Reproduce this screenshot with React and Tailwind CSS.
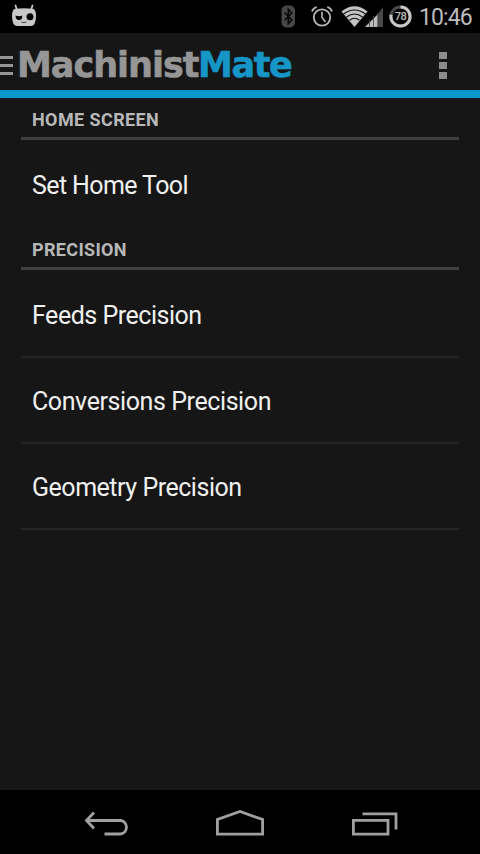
import React from "react";

function StatusBar() {
  return (
    <div className="flex h-[33px] shrink-0 items-start bg-black">
      <svg className="ml-3 mt-1 h-[23px] w-6" viewBox="0 0 24 23">
        <path d="M3.5 1.5L5 6M20.5 1.5L19 6" stroke="#c8c8c8" strokeWidth="1.8" strokeLinecap="round" />
        <path d="M3.5 4.8Q12 3.9 20.5 4.8Q24 5.2 24 12Q24 22 18.5 22H5.5Q0 22 0 12Q0 5.2 3.5 4.8Z" fill="#c8c8c8" />
        <path d="M3.5 11.5Q7 13 10.2 11.5Q10.5 16 7 16Q3.7 16 3.5 11.5Z" fill="#000" />
        <circle cx="18" cy="12.7" r="3.5" fill="#000" />
        <path d="M9.5 18Q12 19.5 14.5 18" stroke="#444" strokeWidth="1" fill="none" />
      </svg>
      <div className="flex-1" />
      <svg className="mt-[5px] h-[23px] w-[15px]" viewBox="0 0 15 23">
        <rect x="0.5" y="0.5" width="13.5" height="22" rx="5" fill="#484848" />
        <path d="M3.5 7.5L10.8 15L7.3 18.7V4.3L10.8 8L3.5 15.5" stroke="#080808" strokeWidth="1.6" fill="none" />
      </svg>
      <svg className="ml-[15px] mt-[5px] h-[23px] w-[22px]" viewBox="0 0 22 23" fill="none" stroke="#b8b8b8">
        <circle cx="11" cy="12.5" r="8.2" strokeWidth="1.8" />
        <path d="M11 6.7V12.5L14.5 17" strokeWidth="1.6" />
        <path d="M1 6.5Q2 3.2 5.7 2M21 6.5Q20 3.2 16.3 2" strokeWidth="1.8" />
      </svg>
      <svg className="ml-[8px] mt-[5px] h-[23px] w-11" viewBox="0 0 44 23">
        <path d="M0.5 6.5Q13.5-4 26.5 6.5L13.5 22Z" fill="#c4c4c4" />
        <g stroke="#101010" strokeWidth="1.2" fill="none">
          <path d="M2.5 9Q13.5 1 24.5 9" />
          <path d="M5.5 12Q13.5 6 21.5 12" />
          <path d="M8.5 15.3Q13.5 11.2 18.5 15.3" />
        </g>
        <path d="M24 22L37 9V22Z" fill="#bdbdbd" />
        <path d="M37 9L42 2V22H37Z" fill="#484848" />
        <path d="M28.5 15V22M32.5 11V22M36.7 8V22" stroke="#444" strokeWidth="0.8" />
      </svg>
      <svg className="ml-[4px] mt-[5px] h-[23px] w-[23px]" viewBox="0 0 23 23">
        <circle cx="11.5" cy="11.5" r="9.6" fill="none" stroke="#484848" strokeWidth="3" />
        <circle cx="11.5" cy="11.5" r="9.6" fill="none" stroke="#c8c8c8" strokeWidth="3" pathLength="100" strokeDasharray="78 22" transform="rotate(-90 11.5 11.5)" />
        <text x="11.5" y="15.4" textAnchor="middle" fill="#c0c0c0" className="font-[Roboto,sans-serif] text-[11px] font-medium tracking-[-0.5px]">78</text>
      </svg>
      <span className="ml-[7px] mr-[7px] mt-[4px] w-[54px] whitespace-nowrap text-[23px] leading-[27px] tracking-[-0.9px] text-[#bcbcbc]">10:46</span>
    </div>
  );
}

function ActionBar() {
  return (
    <header className="flex h-[65px] shrink-0 items-start border-b-[8px] border-[#0d98cb] bg-[#161616]">
      <div className="mt-[23px] flex w-[13px] flex-col gap-[5px]">
        <i className="h-[3px] bg-[#969696]" />
        <i className="h-[3px] bg-[#969696]" />
        <i className="h-[3px] bg-[#969696]" />
      </div>
      <h1 className="ml-[4px] mt-[12px] flex whitespace-nowrap font-['DejaVu_Sans',sans-serif] text-[35px] font-bold leading-[41px] [-webkit-text-stroke:0.6px_currentColor]">
        <span className="w-[181px] tracking-[-1px] text-[#969696]">Machinist</span>
        <span className="tracking-[-1.4px] text-[#1596c6]">Mate</span>
      </h1>
      <div className="ml-auto mr-[33px] mt-[19px] flex w-[8px] flex-col gap-[3px]">
        <i className="h-[7px] bg-[#8c8c8c]" />
        <i className="h-[7px] bg-[#8c8c8c]" />
        <i className="h-[7px] bg-[#8c8c8c]" />
      </div>
    </header>
  );
}

function SectionTitle({ children, className }) {
  return (
    <h2 className={"flex items-center border-b-[3px] border-[#404040] pl-[11px] pt-[4px] text-[18px] font-bold text-[#b8b8b8] " + className}>
      {children}
    </h2>
  );
}

function Item({ children, className }) {
  return (
    <div className={"flex items-center whitespace-pre pl-[11px] text-[25px] text-[#f0f0f0] " + className}>
      {children}
    </div>
  );
}

function NavBar() {
  return (
    <nav className="flex h-16 shrink-0 items-start bg-black pl-[84px] pt-[19px]">
      <svg className="h-[28px] w-[46px]" viewBox="0 0 46 28" fill="none" stroke="#a0a0a0" strokeWidth="2.8">
        <path d="M10 3.5L2.5 11.5L10 19.5M3 11.5H36.5A6.8 6.8 0 0 1 36.5 25H20.5" />
      </svg>
      <svg className="ml-[85px] h-[28px] w-[50px]" viewBox="0 0 50 28" fill="none" stroke="#a0a0a0" strokeWidth="2.8">
        <path d="M2.4 25.2V10.5L25 2.5L47.6 10.5V25.2Z" />
      </svg>
      <svg className="ml-[86px] h-[28px] w-[48px]" viewBox="0 0 48 28" fill="none" stroke="#a0a0a0" strokeWidth="2.8">
        <path d="M2.4 11.4H37V25.2H2.4ZM11.5 4.8H45V20.5" />
      </svg>
    </nav>
  );
}

export default function App() {
  return (
    <div className="flex h-[854px] w-[480px] flex-col overflow-hidden bg-[#161616] font-[Roboto,sans-serif]">
      <StatusBar />
      <ActionBar />
      <main className="flex-1 px-[21px]">
        <SectionTitle className="h-[42px] tracking-[0.4px]">HOME SCREEN</SectionTitle>
        <Item className="h-[88px] pt-[4px] tracking-[-0.6px]">Set Home Tool</Item>
        <SectionTitle className="h-[42px] tracking-[0.35px]">PRECISION</SectionTitle>
        <Item className="h-[88px] border-b-2 border-[#262626] pt-[5px] tracking-[-0.47px]">Feeds Precision</Item>
        <Item className="h-[86px] border-b-2 border-[#262626] pt-[4px] tracking-[-0.41px]">Conversions Precision</Item>
        <Item className="h-[86px] border-b-2 border-[#262626] pt-[3px] tracking-[-0.47px]">Geometry Precision</Item>
      </main>
      <NavBar />
    </div>
  );
}
